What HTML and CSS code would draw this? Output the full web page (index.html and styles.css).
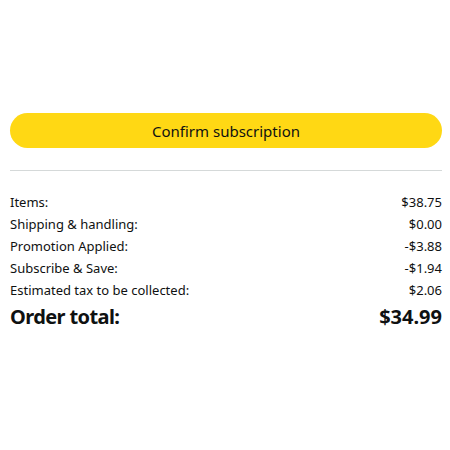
FILE: index.html
```html
<!DOCTYPE html>
<html>
<head>
<meta charset="utf-8">
<link rel="stylesheet" href="styles.css">
</head>
<body>
<div class="page">
  <button class="confirm">Confirm subscription</button>
  <hr class="divider">
  <div class="summary">
    <div class="row"><span>Items:</span><span>$38.75</span></div>
    <div class="row"><span>Shipping &amp; handling:</span><span>$0.00</span></div>
    <div class="row"><span>Promotion Applied:</span><span>-$3.88</span></div>
    <div class="row"><span>Subscribe &amp; Save:</span><span>-$1.94</span></div>
    <div class="row"><span>Estimated tax to be collected:</span><span>$2.06</span></div>
    <div class="row total"><span class="total-label">Order total:</span><span>$34.99</span></div>
  </div>
</div>
</body>
</html>
```

FILE: styles.css
```css
html, body {
  margin: 0;
  padding: 0;
  background: #fff;
}
body {
  font-family: "Noto Sans", "Open Sans", sans-serif;
  color: #0F1111;
}
.page {
  padding: 113px 8px 0 10px;
}
.confirm {
  display: block;
  width: 100%;
  height: 35px;
  border: none;
  border-radius: 18px;
  background: #FFD814;
  color: #0F1111;
  font-family: inherit;
  font-size: 15px;
  padding: 0;
  cursor: pointer;
}
.divider {
  border: none;
  border-top: 1px solid #D5D9D9;
  margin: 22px 0 0;
  height: 0;
}
.summary {
  padding-top: 20px;
}
.row {
  display: flex;
  justify-content: space-between;
  font-size: 13px;
  line-height: 22px;
}
.row.total {
  font-size: 20px;
  font-weight: 700;
  line-height: 30px;
  margin-top: 1px;
}
.total-label {
  letter-spacing: -0.6px;
}
```
